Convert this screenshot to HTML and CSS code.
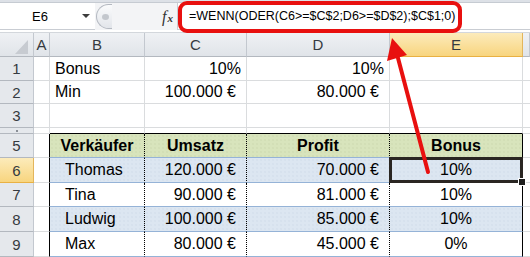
FILE: index.html
```html
<!DOCTYPE html>
<html lang="de">
<head>
    <meta charset="UTF-8">
    <title>Bonus WENN ODER</title>
    <link rel="stylesheet" href="styles.css">
</head>
<body>
<div class="window">
    <div class="top-edge"></div>

    <div class="formula-bar">
        <div class="name-box"><span>E6</span><span class="dd"></span></div>
        <div class="grip"><span class="dot"></span></div>
        <div class="fx-zone"><span class="fx"><i>f</i><b>x</b></span></div>
        <div class="formula">=WENN(ODER(C6&gt;=$C$2;D6&gt;=$D$2);$C$1;0)</div>
    </div>
    <div class="bar-gap"></div>

    <div class="sheet">
        <!-- column headers -->
        <div class="corner"><span class="tri"></span></div>
        <div class="col-h">A</div>
        <div class="col-h">B</div>
        <div class="col-h">C</div>
        <div class="col-h">D</div>
        <div class="col-h active">E</div>
        <div class="col-h"></div>

        <!-- row 1 -->
        <div class="row-h">1</div>
        <div class="cell"></div>
        <div class="cell">Bonus</div>
        <div class="cell pct">10%</div>
        <div class="cell pct">10%</div>
        <div class="cell"></div>
        <div class="cell"></div>

        <!-- row 2 -->
        <div class="row-h">2</div>
        <div class="cell"></div>
        <div class="cell">Min</div>
        <div class="cell eur">100.000 €</div>
        <div class="cell eur">80.000 €</div>
        <div class="cell"></div>
        <div class="cell"></div>

        <!-- row 3 -->
        <div class="row-h">3</div>
        <div class="cell"></div>
        <div class="cell"></div>
        <div class="cell"></div>
        <div class="cell"></div>
        <div class="cell"></div>
        <div class="cell"></div>

        <!-- row 4 (cut off in the picture) -->
        <div class="row-h cut"><span class="tick"></span></div>
        <div class="cell"></div>
        <div class="cell tbl-top"></div>
        <div class="cell tbl-top"></div>
        <div class="cell tbl-top"></div>
        <div class="cell tbl-top"></div>
        <div class="cell"></div>

        <!-- row 5: table header -->
        <div class="row-h">5</div>
        <div class="cell tbl-left"></div>
        <div class="cell th sep">Verkäufer</div>
        <div class="cell th sep">Umsatz</div>
        <div class="cell th sep">Profit</div>
        <div class="cell th last">Bonus</div>
        <div class="cell"></div>

        <!-- row 6 -->
        <div class="row-h active">6</div>
        <div class="cell tbl-left"></div>
        <div class="cell td band sep name">Thomas</div>
        <div class="cell td band sep eur">120.000 €</div>
        <div class="cell td band sep eur">70.000 €</div>
        <div class="cell td band last mid selected">10%</div>
        <div class="cell"></div>

        <!-- row 7 -->
        <div class="row-h">7</div>
        <div class="cell tbl-left"></div>
        <div class="cell td sep name">Tina</div>
        <div class="cell td sep eur">90.000 €</div>
        <div class="cell td sep eur">81.000 €</div>
        <div class="cell td last mid">10%</div>
        <div class="cell"></div>

        <!-- row 8 -->
        <div class="row-h">8</div>
        <div class="cell tbl-left"></div>
        <div class="cell td band sep name">Ludwig</div>
        <div class="cell td band sep eur">100.000 €</div>
        <div class="cell td band sep eur">85.000 €</div>
        <div class="cell td band last mid">10%</div>
        <div class="cell"></div>

        <!-- row 9 -->
        <div class="row-h">9</div>
        <div class="cell tbl-left"></div>
        <div class="cell td sep name">Max</div>
        <div class="cell td sep eur">80.000 €</div>
        <div class="cell td sep eur">45.000 €</div>
        <div class="cell td last mid">0%</div>
        <div class="cell"></div>
    </div>

    <!-- annotation: red frame round the formula and arrow to E6 -->
    <div class="callout"></div>
    <svg class="arrow" width="530" height="257" viewBox="0 0 530 257">
        <line x1="428" y1="172" x2="398" y2="58" stroke="#e8100f" stroke-width="4" stroke-linecap="round"/>
        <polygon points="392,38 407,55 387,61" fill="#e8100f"/>
    </svg>
</div>
</body>
</html>
```

FILE: styles.css
```css
* { box-sizing: border-box; }

body {
    margin: 0;
    background: #fff;
    font-family: "Liberation Sans", Arial, sans-serif;
    color: #000;
}

.window {
    position: relative;
    width: 530px;
    height: 257px;
    overflow: hidden;
}

.top-edge {
    height: 3px;
    background: #dde1e7;
    border-bottom: 1px solid #c6cbd2;
}

/* formula bar */
.formula-bar {
    display: flex;
    height: 27px;
    background: #f3f4f6;
}
.name-box {
    width: 95px;
    display: flex;
    align-items: center;
    padding-left: 32px;
    background: #fff;
    border-bottom: 1px solid #c9cdd3;
    font-size: 13px;
}
.name-box .dd {
    margin-left: auto;
    margin-right: 5px;
    border-left: 4px solid transparent;
    border-right: 4px solid transparent;
    border-top: 4px solid #3d3d3d;
}
.grip {
    position: relative;
    width: 16px;
    margin: 1px 0 1px 1px;
    border: 1px solid #b4b9c1;
    border-right: 0;
    border-radius: 13px 0 0 13px;
    background: linear-gradient(#fafbfc, #e2e5ea);
}
.grip .dot {
    position: absolute;
    left: 5px;
    top: 9px;
    width: 7px;
    height: 6px;
    border-radius: 50%;
    background: #c3c7cd;
}
.fx-zone {
    width: 65px;
    display: flex;
    align-items: center;
    justify-content: flex-end;
    padding-right: 4px;
}
.fx {
    font-family: "Liberation Serif", serif;
    color: #333;
}
.fx i { font-size: 16px; }
.fx b { font-size: 11px; font-style: italic; margin-left: 1px; }
.formula {
    flex: 1;
    display: flex;
    align-items: center;
    padding-left: 11px;
    background: #fff;
    border-left: 1px solid #c9cdd3;
    border-bottom: 1px solid #c9cdd3;
    font-size: 12.5px;
    white-space: nowrap;
}
.bar-gap {
    height: 3px;
    background: #fff;
    border-bottom: 1px solid #d3d7dc;
}

/* worksheet grid */
.sheet {
    display: grid;
    grid-template-columns: 34px 16px 95px 102px 143px 133px 7px;
    grid-template-rows: 24px 24px 23px 24px 6px 24px 25px 24px 25px 25px;
    font-size: 16px;
}
.sheet > div {
    display: flex;
    align-items: center;
    overflow: hidden;
    white-space: nowrap;
}

.corner, .col-h, .row-h {
    background: linear-gradient(#eff1f4, #e0e4e9);
    border-right: 1px solid #c3c8cf;
    border-bottom: 1px solid #b3b8bf;
    color: #353a40;
    font-size: 15px;
    justify-content: center;
}
.row-h { background: #e5e8ec; }
.row-h .tick {
    width: 2px;
    height: 2px;
    background: #8a8f96;
}
.corner { position: relative; }
.corner .tri {
    position: absolute;
    left: 15px;
    top: 7px;
    width: 13px;
    height: 14px;
    background: #c7cbd1;
    clip-path: polygon(100% 0, 100% 100%, 0 100%);
}
.col-h.active, .row-h.active {
    background: linear-gradient(#fcebbb, #f8d57f);
    border-bottom-color: #e9b143;
    border-right-color: #e3b55b;
}

.cell {
    border-right: 1px solid #dadcde;
    border-bottom: 1px solid #dadcde;
    padding: 0 5px;
}
.pct { justify-content: flex-end; }
.eur { justify-content: flex-end; padding-right: 10px; }
.mid { justify-content: center; }
.name { padding-left: 15px; }

/* formatted table B5:E9 */
.tbl-top { border-bottom: 1px solid #000; }
.tbl-left { border-right: 1px solid #000; }
.th {
    justify-content: center;
    font-weight: bold;
    background-color: #d8e4bc;
    background-image: radial-gradient(circle, rgba(110, 130, 80, 0.08) 0.6px, transparent 0.9px);
    background-size: 4px 4px;
    border-bottom: 1px solid #95b3d7;
}
.td { border-bottom: 1px solid #95b3d7; }
.band {
    background-color: #dce6f1;
    background-image: radial-gradient(circle, rgba(90, 110, 150, 0.06) 0.6px, transparent 0.9px);
    background-size: 4px 4px;
}
.sep { border-right: 1px dotted #000; }
.last { border-right: 1px solid #000; }

.selected { position: relative; overflow: visible !important; }
.selected::after {
    content: "";
    position: absolute;
    left: -1px;
    top: -1px;
    right: -1px;
    bottom: -1px;
    border: 3px solid #2a2622;
}
.selected::before {
    content: "";
    position: absolute;
    right: -4px;
    bottom: -4px;
    width: 6px;
    height: 6px;
    background: #1e1e1e;
    border: 1px solid #fff;
    z-index: 1;
}

/* annotation overlay */
.callout {
    position: absolute;
    left: 178px;
    top: 1px;
    width: 284px;
    height: 32px;
    border: 4px solid #e8100f;
    border-radius: 9px;
}
.arrow {
    position: absolute;
    left: 0;
    top: 0;
    pointer-events: none;
}
```
